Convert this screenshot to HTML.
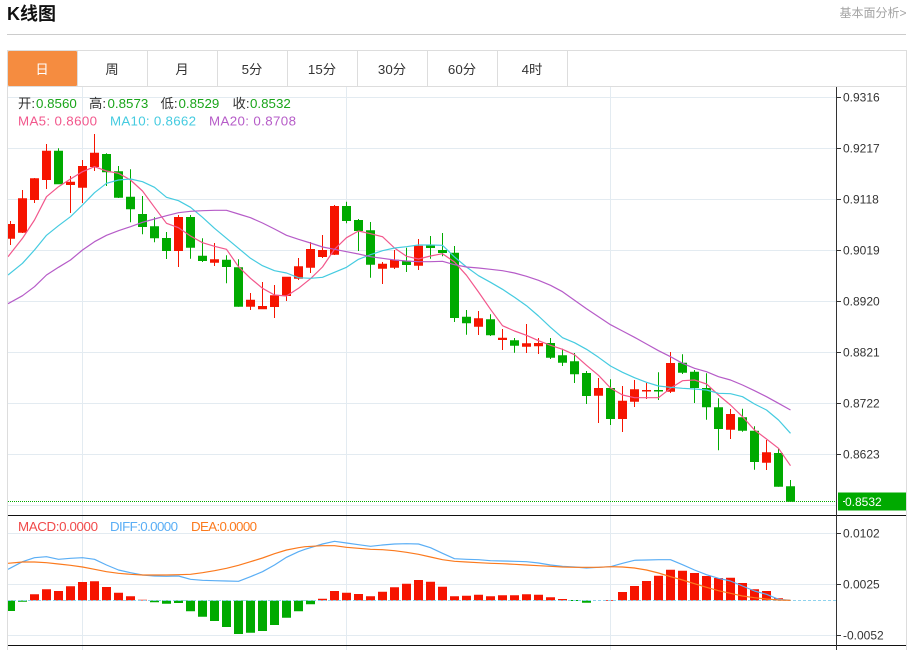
<!DOCTYPE html>
<html lang="zh">
<head>
<meta charset="utf-8">
<title>K线图</title>
<style>
html,body{margin:0;padding:0;background:#fff;width:916px;height:650px;overflow:hidden}
svg{display:block}
text{font-family:"Liberation Sans","Noto Sans CJK SC",sans-serif}
</style>
</head>
<body>
<svg width="916" height="650" viewBox="0 0 916 650" xmlns="http://www.w3.org/2000/svg">
<defs><clipPath id="c"><rect x="8" y="87" width="828" height="563"/></clipPath></defs>

<text x="7" y="20" font-size="18" font-weight="bold" fill="#111">K线图</text>
<text x="839.5" y="17" font-size="12" fill="#a3a3a3">基本面分析&gt;</text>
<path d="M7 34.5H906" stroke="#ccc" fill="none"/>

<!-- frame and tabs -->
<path d="M7.5 650V50.5H906.5V650M7.5 86.5H906.5" stroke="#ddd" fill="none"/>
<path d="M77.5 51V86M147.5 51V86M217.5 51V86M287.5 51V86M357.5 51V86M427.5 51V86M497.5 51V86M567.5 51V86" stroke="#ddd" fill="none"/>
<rect x="8" y="51" width="69" height="35" rx="1" fill="#f58c40"/>
<g font-size="13.33" text-anchor="middle" fill="#333">
<text x="42" y="74" fill="#fff">日</text>
<text x="112" y="74">周</text>
<text x="182" y="74">月</text>
<text x="252" y="74">5分</text>
<text x="322" y="74">15分</text>
<text x="392" y="74">30分</text>
<text x="462" y="74">60分</text>
<text x="532" y="74">4时</text>
</g>

<!-- grid -->
<path d="M8 97.5H836M8 148.5H836M8 199.5H836M8 250.5H836M8 301.5H836M8 352.5H836M8 403.5H836M8 454.5H836M8 505.5H836M8 533.5H836M8 584.5H836M8 635.5H836M82.5 87V650M346.5 87V650M610.5 87V650" stroke="#e3ebf1" fill="none"/>

<!-- dotted last price -->
<path d="M8 501.5H836" stroke="#00aa00" stroke-dasharray="1 1" fill="none"/>

<g clip-path="url(#c)" fill="none">
<!-- candles -->
<path stroke="#f61400" stroke-width="1" d="M10.5 221V245M22.5 190V233M34.5 178V203M46.5 144V189M70.5 176V213M82.5 160V203M94.5 134V171M178.5 215V267M214.5 243V266M250.5 293V310M262.5 282V309M274.5 285V318M286.5 277V301M298.5 258V280M310.5 242V273M322.5 235V258M334.5 205V255M382.5 262V284M394.5 250V269M418.5 239V270M478.5 311V335M502.5 329V350M526.5 324V353M538.5 338V354M598.5 378V423M622.5 386V432M634.5 380V407M646.5 383V399M670.5 352V393M730.5 409V439M766.5 440V470"/>
<path stroke="#f61400" stroke-width="9" d="M10.5 224V238.7M22.5 198.3V232.7M34.5 178.3V200M46.5 150.7V180M70.5 181.7V185M82.5 166V187.7M94.5 152.7V167M178.5 217V251M214.5 259.3V262.7M250.5 299.7V306.7M262.5 306V309.3M274.5 295.3V307M286.5 276.7V296M298.5 266.3V278.7M310.5 249V267.7M322.5 250V257M334.5 206V254.7M382.5 263.7V268.7M394.5 259.7V267.7M418.5 245.7V265.7M478.5 318.3V326.7M502.5 337.7V340M526.5 343.3V346.7M538.5 343V346.3M598.5 388V395.7M622.5 400.7V419M634.5 389.3V401.7M646.5 390V391.5M670.5 363V391.7M730.5 414V429.7M766.5 452.3V462.7"/>
<path stroke="#00aa00" stroke-width="1" d="M58.5 148.3V184M106.5 153.3V186M118.5 166V198M130.5 169.3V222.3M142.5 196V234.3M154.5 217.3V242.3M166.5 232V259M190.5 215V258.7M202.5 238.3V262M226.5 255.3V283.3M238.5 259.3V306.7M346.5 201.7V223.3M358.5 219V251M370.5 222V277.7M406.5 247.7V272M430.5 236V258.7M442.5 233V256.3M454.5 246V322M466.5 310V334.7M490.5 314.3V336M514.5 338V352.7M550.5 338V359M562.5 348.7V366M574.5 353V383M586.5 371V404M610.5 379.3V425M658.5 372.3V400M682.5 354.3V374M694.5 370V403M706.5 373.3V419.7M718.5 398.3V450.3M742.5 408.7V431.7M754.5 426.3V469.7M778.5 448.7V486.7M790.5 480V501.7"/>
<path stroke="#00aa00" stroke-width="9" d="M58.5 150.7V184.3M106.5 154V172.3M118.5 171.3V197.7M130.5 196.7V209.3M142.5 214V227M154.5 226.3V238.3M166.5 238V251M190.5 217V247.7M202.5 255.7V261M226.5 259.7V267M238.5 267.3V306.7M346.5 206V221M358.5 220V231M370.5 230.3V264.7M406.5 261V265M430.5 245.3V248M442.5 250V253M454.5 252.7V318M466.5 316.7V323.3M490.5 319.3V335.3M514.5 340.3V345.7M550.5 343V357.7M562.5 355.3V362.7M574.5 361.3V374.3M586.5 373V396M610.5 388V419M658.5 390V391.5M682.5 362.7V372.7M694.5 371.7V388M706.5 388V407.3M718.5 407.3V429M742.5 417.3V430.7M754.5 430.7V462M778.5 453V486.7M790.5 486.3V501.7"/>

<!-- MA lines -->
<polyline stroke="#f2578c" stroke-width="1.2" stroke-linejoin="round" points="8,256.7 22.5,238.3 34.5,220 46.5,196.7 58.5,186.7 70.5,179 82.5,171.7 94.5,166.7 106.5,171 118.5,173.3 130.5,180 142.5,191 154.5,207.3 166.5,223.3 178.5,227.7 190.5,236 202.5,242.7 214.5,246.3 226.5,249.3 238.5,266.7 250.5,278.3 262.5,288.3 274.5,295 286.5,296 298.5,288.3 310.5,278.7 322.5,267 334.5,249.3 346.5,237.7 358.5,231 370.5,233.7 382.5,236.7 394.5,248 406.5,256.3 418.5,259 430.5,256 442.5,253.7 454.5,262 466.5,275.3 478.5,292 490.5,309.3 502.5,325.7 514.5,331 526.5,335.3 538.5,340.7 550.5,345.3 562.5,349.3 574.5,354.7 586.5,365.3 598.5,375.3 610.5,388 622.5,395 634.5,397.7 646.5,397.7 658.5,397.7 670.5,388.3 682.5,380.7 694.5,380 706.5,384 718.5,395 730.5,405 742.5,416.7 754.5,430 766.5,439 778.5,448.3 790.5,465.7"/>
<polyline stroke="#45cbe0" stroke-width="1.2" stroke-linejoin="round" points="8,275 22.5,263.3 34.5,250 46.5,235.3 58.5,225.7 70.5,216.7 82.5,205 94.5,192.7 106.5,183.3 118.5,180 130.5,179 142.5,181.7 154.5,187.3 166.5,197.3 178.5,200.7 190.5,207.3 202.5,217.3 214.5,228.3 226.5,238.3 238.5,248.3 250.5,258.3 262.5,265.7 274.5,270.7 286.5,273 298.5,277.7 310.5,278.3 322.5,277.3 334.5,272.3 346.5,267.3 358.5,259.3 370.5,254.7 382.5,250.7 394.5,248 406.5,246.7 418.5,245 430.5,245 442.5,245.3 454.5,257 466.5,267 478.5,275.7 490.5,282.3 502.5,289.3 514.5,297.3 526.5,305.7 538.5,316 550.5,327.3 562.5,337.7 574.5,342.7 586.5,349.3 598.5,357.3 610.5,366 622.5,372.3 634.5,377.7 646.5,382.3 658.5,386 670.5,387.3 682.5,388.3 694.5,389 706.5,390 718.5,393.3 730.5,393.7 742.5,396.7 754.5,404 766.5,410 778.5,420 790.5,433.3"/>
<polyline stroke="#b65cc8" stroke-width="1.2" stroke-linejoin="round" points="8,303.7 22.5,295.7 34.5,286.7 46.5,275 58.5,267.3 70.5,260 82.5,250 94.5,241.7 106.5,235.3 118.5,230.7 130.5,226.7 142.5,222.3 154.5,219 166.5,215.7 178.5,212.7 190.5,211.3 202.5,210.7 214.5,210.3 226.5,210.3 238.5,214 250.5,217.7 262.5,223 274.5,229 286.5,235.3 298.5,239.3 310.5,243 322.5,247 334.5,249.3 346.5,251.7 358.5,254 370.5,256.7 382.5,258.3 394.5,260 406.5,261 418.5,261.7 430.5,261.7 442.5,261.3 454.5,264.7 466.5,267 478.5,268 490.5,269.3 502.5,270.7 514.5,273 526.5,276.3 538.5,280.3 550.5,285.3 562.5,291.7 574.5,300.3 586.5,308.7 598.5,316.7 610.5,324.7 622.5,331 634.5,337.3 646.5,344 658.5,350.7 670.5,356.7 682.5,363.3 694.5,368.3 706.5,371.7 718.5,376.7 730.5,380 742.5,385 754.5,390.7 766.5,396.7 778.5,403.3 790.5,410"/>

<!-- MACD bars -->
<path stroke="#f61400" stroke-width="9" d="M34.5 594.3V600.5M46.5 589.3V600.5M58.5 591V600.5M70.5 586.3V600.5M82.5 582V600.5M94.5 581.3V600.5M106.5 587V600.5M118.5 592.7V600.5M130.5 596.3V600.5M142.5 599.8V600.5M322.5 598.7V600.5M334.5 591V600.5M346.5 592.7V600.5M358.5 594V600.5M370.5 596.3V600.5M382.5 591.7V600.5M394.5 587.3V600.5M406.5 583.7V600.5M418.5 580V600.5M430.5 581.7V600.5M442.5 586.7V600.5M454.5 596.3V600.5M466.5 595.7V600.5M478.5 594.7V600.5M490.5 596.3V600.5M502.5 595.3V600.5M514.5 595.3V600.5M526.5 594.3V600.5M538.5 594.7V600.5M550.5 597.3V600.5M562.5 599V600.5M610.5 600V600.8M622.5 592V600.5M634.5 586V600.5M646.5 581V600.5M658.5 575.7V600.5M670.5 569.7V600.5M682.5 570.7V600.5M694.5 573V600.5M706.5 576V600.5M718.5 578V600.5M730.5 577.7V600.5M742.5 583V600.5M754.5 589.3V600.5M766.5 591V600.5M778.5 598.3V600.5"/>
<path stroke="#00aa00" stroke-width="9" d="M10.5 600.5V611M22.5 600.5V601.7M154.5 600.5V602.3M166.5 600.5V603.7M178.5 600.5V603M190.5 600.5V611.3M202.5 600.5V616.7M214.5 600.5V621M226.5 600.5V627M238.5 600.5V634M250.5 600.5V632.7M262.5 600.5V631M274.5 600.5V625M286.5 600.5V617.7M298.5 600.5V611.3M310.5 600.5V604.3M574.5 600V601M586.5 600.5V602.7"/>
<path d="M8 600.5H836" stroke="#8fd3ee" stroke-dasharray="3 2"/>

<!-- DIFF / DEA -->
<polyline stroke="#5aaef5" stroke-width="1.2" stroke-linejoin="round" points="8,569.3 22.5,561.7 34.5,557.7 46.5,556.7 58.5,559.3 70.5,558.3 82.5,557.7 94.5,559.3 106.5,565 118.5,570 130.5,572.7 142.5,575 154.5,576 166.5,576.3 178.5,576 190.5,579.3 202.5,580.3 214.5,580.7 226.5,581 238.5,581.3 250.5,576.7 262.5,571.7 274.5,565 286.5,557.3 298.5,551.7 305,549.3 322.5,544 334.5,541.3 346.5,543 358.5,544.7 370.5,546.3 382.5,545 394.5,544 406.5,543.7 418.5,544 430.5,547.7 442.5,553.3 454.5,558.7 466.5,559.3 478.5,559.7 490.5,560.7 502.5,561 514.5,561.3 526.5,561.7 538.5,563 550.5,565 562.5,566.3 574.5,567 586.5,568 598.5,567.3 610.5,566.7 622.5,563.3 634.5,560.3 646.5,560 658.5,559.7 670.5,559.7 682.5,564.7 694.5,570 706.5,574.7 718.5,578.3 730.5,581 742.5,586 754.5,591 766.5,594.3 778.5,599.3 790.5,600.3"/>
<polyline stroke="#fb7a1e" stroke-width="1.2" stroke-linejoin="round" points="8,563.3 22.5,562 34.5,562 46.5,562.7 58.5,564 70.5,565.3 82.5,567 94.5,569.3 106.5,571.7 118.5,573.3 130.5,574.3 142.5,575 154.5,575 166.5,575 178.5,574.7 190.5,574.3 202.5,572.7 214.5,570.7 226.5,568.3 238.5,565.3 250.5,561.7 262.5,558 274.5,553.7 286.5,550 298.5,547.7 305,546.7 322.5,545.7 334.5,545.7 346.5,547.3 358.5,548.3 370.5,549.3 382.5,549.7 394.5,550.7 406.5,552.3 418.5,554.3 430.5,557 442.5,559.7 454.5,561.3 466.5,562 478.5,562.7 490.5,563.3 502.5,563.7 514.5,564.3 526.5,565 538.5,565.7 550.5,566.3 562.5,567 574.5,567.3 586.5,567.3 598.5,567.3 610.5,566.7 622.5,567 634.5,568 646.5,570 658.5,573 670.5,576.7 682.5,580 694.5,583.7 706.5,587.3 718.5,590.7 730.5,593.3 742.5,596 754.5,597.7 766.5,599 778.5,600 790.5,600.3"/>
</g>

<!-- axis, separators -->
<path d="M8 515.5H906M8 645.5H906" stroke="#111" fill="none"/>
<path d="M836.5 87V650" stroke="#333" fill="none"/>
<path d="M837 97.5H841M837 148.5H841M837 199.5H841M837 250.5H841M837 301.5H841M837 352.5H841M837 403.5H841M837 454.5H841M837 533.5H841M837 584.5H841M837 635.5H841" stroke="#333" fill="none"/>
<g font-size="12" fill="#333">
<text x="843" y="101.5">0.9316</text>
<text x="843" y="152.5">0.9217</text>
<text x="843" y="203.5">0.9118</text>
<text x="843" y="254.5">0.9019</text>
<text x="843" y="305.5">0.8920</text>
<text x="843" y="356.5">0.8821</text>
<text x="843" y="407.5">0.8722</text>
<text x="843" y="458.5">0.8623</text>
<text x="843" y="537.5">0.0102</text>
<text x="843" y="588.5">0.0025</text>
<text x="843" y="639.5">-0.0052</text>
</g>
<rect x="838" y="492.5" width="68" height="18" fill="#00aa00"/>
<path d="M843 501.5H845" stroke="#fff" fill="none"/>
<text x="845" y="506" font-size="12" fill="#fff">0.8532</text>

<!-- legend -->
<g font-size="13.33">
<text x="18" y="108" fill="#333">开:</text><text x="36" y="108" fill="#1aa51a">0.8560</text>
<text x="89" y="108" fill="#333">高:</text><text x="107.5" y="108" fill="#1aa51a">0.8573</text>
<text x="160.5" y="108" fill="#333">低:</text><text x="178.5" y="108" fill="#1aa51a">0.8529</text>
<text x="232.5" y="108" fill="#333">收:</text><text x="250" y="108" fill="#1aa51a">0.8532</text>
<text x="18" y="125.5" fill="#f2578c" textLength="79">MA5: 0.8600</text>
<text x="110" y="125.5" fill="#45cbe0" textLength="86">MA10: 0.8662</text>
<text x="209" y="125.5" fill="#b65cc8" textLength="87">MA20: 0.8708</text>
<text x="18" y="531" fill="#f04a4a" textLength="80">MACD:0.0000</text>
<text x="110" y="531" fill="#5aaef5" textLength="68">DIFF:0.0000</text>
<text x="191" y="531" fill="#fb7a1e" textLength="66">DEA:0.0000</text>
</g>
</svg>
</body>
</html>
